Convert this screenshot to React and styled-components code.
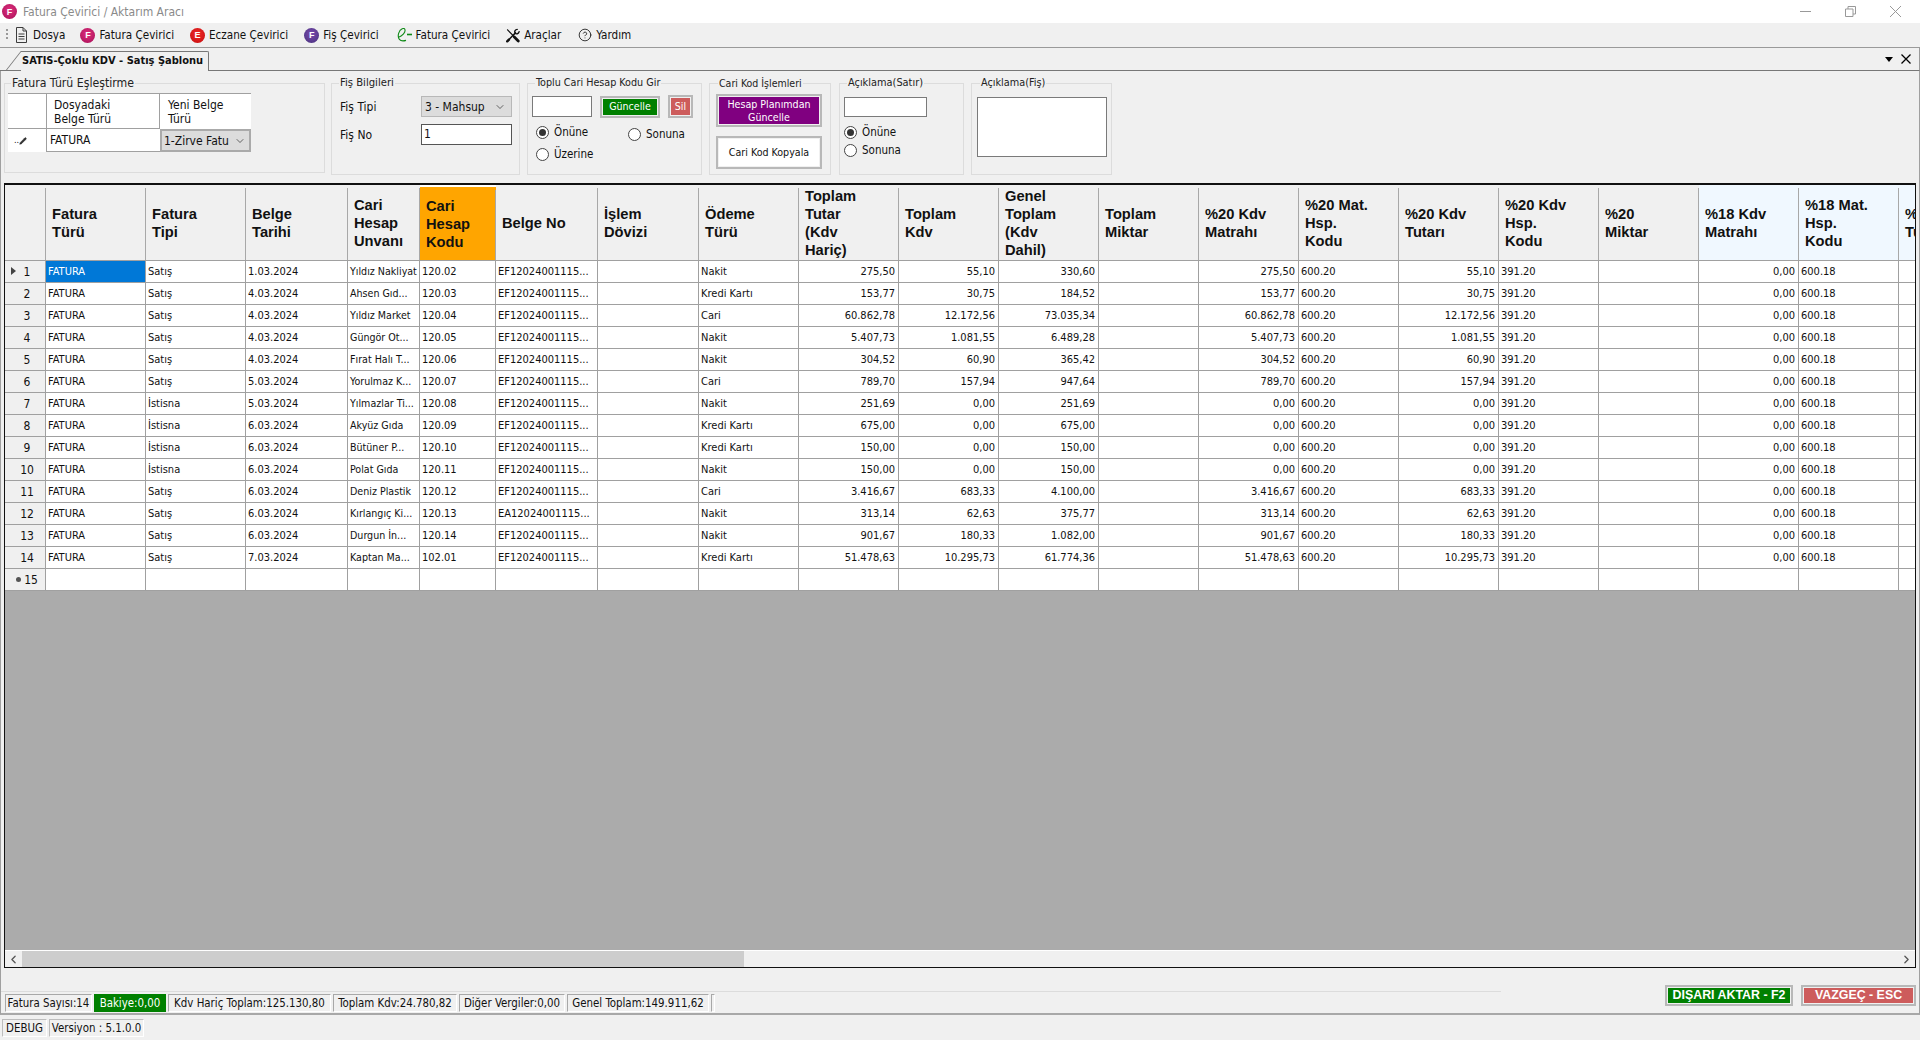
import React from 'react';
import styled, { createGlobalStyle } from 'styled-components';
import { CircleHelp, ChevronDown, ChevronLeft, ChevronRight, Pencil } from 'lucide-react';

const Global = createGlobalStyle`
  html, body { margin: 0; padding: 0; background: #f0f0f0; }
  * { box-sizing: border-box; }
  body { font-family: "DejaVu Sans Condensed", "DejaVu Sans", "Liberation Sans", sans-serif; font-stretch: condensed; font-size: 12px; color: #111; }
`;

const Page = styled.div`
  width: 1920px; height: 1040px; overflow: hidden; display: flex; flex-direction: column; background: #f0f0f0;
`;
const TitleBar = styled.div`
  height: 23px; background: #fff; display: flex; align-items: center; padding-left: 2px; flex: none;
`;
const TitleText = styled.span`color: #8a8a8a; font-size: 12px; margin-left: 6px;`;
const WindowButtons = styled.div`
  margin-left: auto; display: flex; align-items: center; gap: 34px; padding-right: 19px; color: #999;
`;
const MenuBar = styled.div`
  height: 24px; flex: none; display: flex; align-items: center; padding-left: 6px; background: #f0f0f0;
`;
const Grip = styled.span`
  width: 2px; height: 12px; margin-right: 8px; background: repeating-linear-gradient(to bottom, #999 0 2px, transparent 2px 4px);
`;
const MenuItem = styled.div`
  display: flex; align-items: center; gap: 4px; font-size: 11.6px; margin-right: ${p => p.$mr ?? 16}px; white-space: nowrap;
`;
const Badge = styled.span`
  width: 15px; height: 15px; border-radius: 50%; background: ${p => p.$bg};
  color: #fff; font: bold 9px "Liberation Sans", sans-serif; display: inline-flex; align-items: center; justify-content: center; flex: none;
`;
const TabStrip = styled.div`
  height: 24px; flex: none; border-top: 1px solid #9a9a9a; border-bottom: 1px solid #777; border-right: 1px solid #9a9a9a;
  display: flex; align-items: flex-end; padding-left: 21px; background: #f0f0f0;
`;
const Tab = styled.div`
  position: relative; height: 20px; width: 188px; margin-bottom: -1px; background: #f0f0f0;
  border-top: 1px solid #777; border-right: 1px solid #777; border-top-right-radius: 2px;
  font-weight: bold; font-size: 11px; line-height: 18px; padding-left: 1px; white-space: nowrap;
  &::before {
    content: ""; position: absolute; left: -8px; top: -1px; bottom: 0; width: 1px; background: #777;
    transform: skewX(-38deg); transform-origin: center; 
  }
`;
const TabActions = styled.div`
  margin-left: auto; display: flex; align-items: center; gap: 8px; align-self: center; padding-right: 8px;
`;
const Caret = styled.span`
  width: 0; height: 0; border-left: 4px solid transparent; border-right: 4px solid transparent; border-top: 5px solid #000;
`;
const Panel = styled.div`
  height: 944px; flex: none; display: flex; flex-direction: column;
  border-left: 1px solid #a0a0a0; border-right: 1px solid #a0a0a0; border-bottom: 2px solid #a8a8a8;
`;
const GroupRow = styled.div`
  height: 112px; flex: none; display: flex; align-items: flex-start; padding: 5px 0 0 3px;
`;
const Group = styled.fieldset`
  margin: 0 ${p => p.$gap ?? 7}px 0 0; padding: 0; border: 1px solid #dcdcdc; width: ${p => p.$w}px; height: ${p => p.$h ?? 99}px; min-width: 0;
  padding-left: ${p => p.$pl ?? 4}px;
`;
const Legend = styled.legend`
  margin-left: ${p => p.$ml ?? 7}px; padding: 0 1px; font-size: ${p => p.$fs ?? 12}px; line-height: 14px; color: #222; white-space: nowrap;
`;
const MatchGrid = styled.div`
  display: grid; grid-template-columns: 39px 113px 91px; grid-template-rows: 35px 23px; width: 243px; margin-top: 3px;
  background: #fff; border-top: 1px solid #a0a0a0;
`;
const MatchHead = styled.div`
  white-space: pre-line; line-height: 14px; padding: 4px 0 0 ${p => p.$pl}px; background: #fff;
  border-right: ${p => p.$line ? '1px solid #a0a0a0' : '0'}; border-bottom: ${p => p.$lineB ? '1px solid #a0a0a0' : '0'};
`;
const MatchMark = styled.div`
  display: flex; align-items: center; padding-left: 6px; font-size: 9px; line-height: 1; border-right: 1px solid #a0a0a0;
`;
const MatchValue = styled.div`
  padding-left: 3px; line-height: 22px; border-bottom: 1px solid #a0a0a0; font-size: 12px;
`;
const CellSelect = styled.div`
  background: #dcdcdc; border: 2px solid #aaa; display: flex; align-items: center; justify-content: space-between; padding: 0 3px 0 2px;
  white-space: nowrap; overflow: hidden; font-size: 12px;
`;
const FormGrid = styled.div`
  display: grid; grid-template-columns: 81px 91px; grid-template-rows: 21px 21px; row-gap: 7px; padding: 6px 0 0 4px; align-items: center;
`;
const Select = styled.div`
  height: 21px; background: #dcdcdc; border: 1px solid #b8b8b8; display: flex; align-items: center; justify-content: space-between; padding: 0 5px 0 3px;
`;
const Input = styled.div`
  width: ${p => p.$w}px; height: ${p => p.$h}px; background: #fff; border: 1px solid ${p => p.$dark ? '#555' : '#7a7a7a'}; padding: 2px 2px; line-height: 15px;
`;
const BtnRow = styled.div`
  display: flex; align-items: center; padding-top: 5px;
`;
const ColorButton = styled.div`
  width: ${p => p.$w}px; height: ${p => p.$h}px; flex: none;
  border: 2px solid #b8b8b8; padding: 1px; background: ${p => p.$bg}; background-clip: content-box;
  color: ${p => p.$fg}; display: flex; align-items: center; justify-content: center; text-align: center; white-space: pre-line;
  font-size: ${p => p.$fs ?? 12}px; line-height: 13px; margin: ${p => p.$m ?? 0};
  font-weight: ${p => p.$bold ? 'bold' : 'normal'};
  font-family: ${p => p.$bold ? '"Liberation Sans", sans-serif' : 'inherit'};
`;
const RadioGrid = styled.div`
  display: grid; grid-template-columns: 92px auto; padding: 7px 0 0 4px;
`;
const RadioColumn = styled.div`
  display: flex; flex-direction: column; gap: ${p => p.$gap}px; padding-top: ${p => p.$top ?? 0}px;
`;
const RadioLabel = styled.div`
  display: flex; align-items: center; gap: 5px; height: 14px; font-size: 11.5px;
`;
const RadioMark = styled.span`
  width: 13px; height: 13px; border-radius: 50%; border: 1px solid #444; background: #fff; flex: none; display: flex; align-items: center; justify-content: center;
  &::after { content: ""; width: 7px; height: 7px; border-radius: 50%; background: ${p => p.$on ? '#333' : 'transparent'}; }
`;
const Stack = styled.div`
  display: flex; flex-direction: column; padding-top: ${p => p.$top}px; gap: ${p => p.$gap ?? 0}px;
`;
const DataGrid = styled.div`
  flex: 1; min-height: 0; margin: 0 3px 0 3px; display: flex; flex-direction: column; border: 1px solid #111; border-top-width: 2px; overflow: hidden;
`;
const GridBody = styled.div`
  flex: 1; min-height: 0; overflow: hidden; background: #ababab;
`;
const Table = styled.div`
  display: grid; width: max-content; grid-template-columns: 41px 100px 100px 102px 72px 76px 102px 101px repeat(13, 100px);
  grid-template-rows: 76px repeat(15, 22px); background: #fff;
`;
const HeadCell = styled.div`
  position: relative; background: ${p => p.$bg ?? '#f0f0f0'}; font: bold 14.7px/18px "Liberation Sans", sans-serif; color: #111;
  white-space: pre-line; display: flex; align-items: center; padding-left: 6px; border-bottom: 1px solid #a0a0a0;
  margin-top: ${p => p.$orange ? 2 : 0}px;
  &::after {
    content: ""; position: absolute; right: 0; top: 3px; bottom: 0; width: 1px; background: #a8a8a8;
  }
`;
const RowHead = styled.div`
  background: #f0f0f0; border-right: 1px solid #a0a0a0; border-bottom: 1px solid #a0a0a0; display: flex; align-items: center;
  position: relative; justify-content: center; padding-left: 4px; font-size: 12px;
`;
const RowArrow = styled.span`
  position: absolute; left: 6px; top: 6px; width: 0; height: 0; border-top: 4px solid transparent; border-bottom: 4px solid transparent; border-left: 5px solid #444;
`;
const NewDot = styled.span`
  width: 5px; height: 5px; border-radius: 50%; background: #555; margin-right: 3px;
`;
const Cell = styled.div`
  background: ${p => p.$sel ? '#0078d7' : '#fff'}; color: ${p => p.$sel ? '#fff' : '#111'};
  border-right: 1px solid #a0a0a0; border-bottom: 1px solid #a0a0a0;
  font-size: ${p => p.$narrow ? 10.6 : 11}px; line-height: 21px; padding: 0 3px 0 2px; text-align: ${p => p.$right ? 'right' : 'left'};
  white-space: nowrap; overflow: hidden;
`;
const ScrollBar = styled.div`
  height: 17px; flex: none; background: #f0f0f0; border-top: 1px solid #fff; display: flex; align-items: center; color: #555;
`;
const ScrollArrow = styled.div`
  width: 17px; display: flex; align-items: center; justify-content: center; flex: none;
`;
const ScrollTrack = styled.div`
  flex: 1; height: 16px; display: flex;
`;
const ScrollThumb = styled.div`
  width: 722px; background: #cdcdcd;
`;
const Footer = styled.div`
  height: 45px; flex: none; display: flex; align-items: flex-start;
`;
const StatusStrip = styled.div`
  width: 1500px; margin-top: 23px; padding: 2px 0 0 4px; border-top: 1px solid #dcdcdc; display: flex; gap: 2px; height: 22px; flex: none;
`;
const StatusItem = styled.div`
  height: 18px; width: ${p => p.$w}px; flex: none; padding: 0 1px; line-height: 17px; font-size: 11.4px; text-align: center; white-space: nowrap;
  border: 1px solid; border-color: #a8a8a8 #fff #fff #a8a8a8;
  ${p => p.$green ? 'background:#008000;color:#fff;border-color:#008000;' : ''}
`;
const Actions = styled.div`
  margin-left: auto; padding: 17px 3px 0 0; display: flex; gap: 8px;
`;
const BottomBar = styled.div`
  flex: 1; display: flex; gap: 2px; padding: 4px 0 0 2px;
`;
const BottomItem = styled(StatusItem)`border-color: #bdbdbd #fff #fff #bdbdbd;`;

const DocIcon = () => (
  <svg width="13" height="16" viewBox="0 0 13 16" fill="none" stroke="#3c3c3c" strokeWidth="1">
    <path d="M.5.5h6.5l3.5 3.5v11.5H.5z" />
    <path d="M7 .5V4h3.5M2.5 7h6M2.5 9.5h6M2.5 12h6" />
  </svg>
);
const ELogoIcon = () => (
  <svg width="15" height="16" viewBox="0 0 15 16" fill="none" stroke="#108a18">
    <path d="M1.6 10.2C5 9.2 8.6 5.6 8 2.8 7.4.4 3.2 1 1.6 6.4.4 11 2.4 15.4 9 13.4" strokeWidth="1.1" />
    <path d="M10 7.5h5" strokeWidth="1.6" />
  </svg>
);
const ToolsIcon = () => (
  <svg width="14" height="15" viewBox="0 0 16 16" fill="none" stroke="#111" strokeLinecap="round">
    <path d="M1.8 1.5 8.5 8.5" strokeWidth="1.4" />
    <path d="M9.5 9.8 14 14.2" strokeWidth="3.2" />
    <path d="M2.2 13.8 10.8 5" strokeWidth="1.7" />
    <path d="M1.4 14.6 3.4 12.6" strokeWidth="2.8" />
    <path d="M12.8 1C10.6 1 9.3 3.2 10.3 5.2 11.8 6.8 14.4 6.2 15 3.6" strokeWidth="1.6" />
  </svg>
);

const heads = [
  ['Fatura\nTürü'], ['Fatura\nTipi'], ['Belge\nTarihi'], ['Cari\nHesap\nUnvanı'], ['Cari\nHesap\nKodu', '#ffa500'], ['Belge No'],
  ['İşlem\nDövizi'], ['Ödeme\nTürü'], ['Toplam\nTutar\n(Kdv\nHariç)'], ['Toplam\nKdv'], ['Genel\nToplam\n(Kdv\nDahil)'], ['Toplam\nMiktar'],
  ['%20 Kdv\nMatrahı'], ['%20 Mat.\nHsp.\nKodu'], ['%20 Kdv\nTutarı'], ['%20 Kdv\nHsp.\nKodu'], ['%20\nMiktar'],
  ['%18 Kdv\nMatrahı', '#f0f8ff'], ['%18 Mat.\nHsp.\nKodu', '#f0f8ff'], ['%18 Kdv\nTutarı', '#f0f8ff'],
];

const rows = [
  ['Satış', '1.03.2024', 'Yıldız Nakliyat', '120.02', 'EF12024001115...', 'Nakit', '275,50', '55,10', '330,60'],
  ['Satış', '4.03.2024', 'Ahsen Gıd...', '120.03', 'EF12024001115...', 'Kredi Kartı', '153,77', '30,75', '184,52'],
  ['Satış', '4.03.2024', 'Yıldız Market', '120.04', 'EF12024001115...', 'Cari', '60.862,78', '12.172,56', '73.035,34'],
  ['Satış', '4.03.2024', 'Güngör Ot...', '120.05', 'EF12024001115...', 'Nakit', '5.407,73', '1.081,55', '6.489,28'],
  ['Satış', '4.03.2024', 'Fırat Halı T...', '120.06', 'EF12024001115...', 'Nakit', '304,52', '60,90', '365,42'],
  ['Satış', '5.03.2024', 'Yorulmaz K...', '120.07', 'EF12024001115...', 'Cari', '789,70', '157,94', '947,64'],
  ['İstisna', '5.03.2024', 'Yılmazlar Ti...', '120.08', 'EF12024001115...', 'Nakit', '251,69', '0,00', '251,69'],
  ['İstisna', '6.03.2024', 'Akyüz Gıda', '120.09', 'EF12024001115...', 'Kredi Kartı', '675,00', '0,00', '675,00'],
  ['İstisna', '6.03.2024', 'Bütüner P...', '120.10', 'EF12024001115...', 'Kredi Kartı', '150,00', '0,00', '150,00'],
  ['İstisna', '6.03.2024', 'Polat Gıda', '120.11', 'EF12024001115...', 'Nakit', '150,00', '0,00', '150,00'],
  ['Satış', '6.03.2024', 'Deniz Plastik', '120.12', 'EF12024001115...', 'Cari', '3.416,67', '683,33', '4.100,00'],
  ['Satış', '6.03.2024', 'Kırlangıç Ki...', '120.13', 'EA12024001115...', 'Nakit', '313,14', '62,63', '375,77'],
  ['Satış', '6.03.2024', 'Durgun İn...', '120.14', 'EF12024001115...', 'Nakit', '901,67', '180,33', '1.082,00'],
  ['Satış', '7.03.2024', 'Kaptan Ma...', '102.01', 'EF12024001115...', 'Kredi Kartı', '51.478,63', '10.295,73', '61.774,36'],
];

const rightCols = new Set([8, 9, 10, 11, 12, 14, 16, 17, 19]);

const toCells = ([tipi, tarih, unvan, kod, belge, odeme, tutar, kdv, genel]) => {
  const zero = kdv === '0,00';
  return ['FATURA', tipi, tarih, unvan, kod, belge, '', odeme, tutar, kdv, genel, '', zero ? '0,00' : tutar, '600.20', kdv, '391.20', '', '0,00', '600.18', ''];
};

const Radio = ({ on, children }) => (
  <RadioLabel><RadioMark $on={on} />{children}</RadioLabel>
);

export default function App() {
  return (
    <Page>
      <Global />
      <TitleBar>
        <Badge $bg="radial-gradient(circle at 50% 40%, #e0307f, #a50f55)">F</Badge>
        <TitleText>Fatura Çevirici / Aktarım Aracı</TitleText>
        <WindowButtons>
          <svg width="11" height="11" viewBox="0 0 11 11"><path d="M0 5.5h11" stroke="#999" /></svg>
          <svg width="11" height="11" viewBox="0 0 11 11" fill="none" stroke="#999"><path d="M.5 3h7.5v7.5H.5zM3 3V.5h7.5V8H8" /></svg>
          <svg width="11" height="11" viewBox="0 0 11 11" stroke="#999"><path d="M0 0l11 11M11 0L0 11" /></svg>
        </WindowButtons>
      </TitleBar>
      <MenuBar>
        <Grip />
        <MenuItem $mr={15}><DocIcon />Dosya</MenuItem>
        <MenuItem $mr={16}><Badge $bg="radial-gradient(circle at 50% 40%, #e0307f, #a50f55)">F</Badge>Fatura Çevirici</MenuItem>
        <MenuItem $mr={16}><Badge $bg="radial-gradient(circle at 50% 40%, #f02a2a, #c40d0d)">E</Badge>Eczane Çevirici</MenuItem>
        <MenuItem $mr={18}><Badge $bg="radial-gradient(circle at 50% 40%, #7a4bb0, #46307a)">F</Badge>Fiş Çevirici</MenuItem>
        <MenuItem $mr={16}><ELogoIcon />Fatura Çevirici</MenuItem>
        <MenuItem $mr={17}><ToolsIcon />Araçlar</MenuItem>
        <MenuItem><CircleHelp size={14} strokeWidth={1.4} />Yardım</MenuItem>
      </MenuBar>
      <TabStrip>
        <Tab>SATIS-Çoklu KDV - Satış Şablonu</Tab>
        <TabActions>
          <Caret />
          <svg width="10" height="10" viewBox="0 0 10 10" stroke="#000" strokeWidth="1.3"><path d="M.5.5l9 9M9.5.5l-9 9" /></svg>
        </TabActions>
      </TabStrip>
      <Panel>
        <GroupRow>
          <Group $w={321} $h={97} $gap={6} $pl={3}>
            <Legend $ml={3} $fs={12.2}>Fatura Türü Eşleştirme</Legend>
            <MatchGrid>
              <MatchHead $pl={0} $line $lineB />
              <MatchHead $pl={7} $line $lineB>{'Dosyadaki\nBelge Türü'}</MatchHead>
              <MatchHead $pl={8}>{'Yeni Belge\nTürü'}</MatchHead>
              <MatchMark>..<Pencil size={8} fill="#333" strokeWidth={1} /></MatchMark>
              <MatchValue>FATURA</MatchValue>
              <CellSelect>1-Zirve Fatu<ChevronDown size={12} strokeWidth={1.2} /></CellSelect>
            </MatchGrid>
          </Group>
          <Group $w={189} $pl={4}>
            <Legend $ml={3} $fs={11.2}>Fiş Bilgileri</Legend>
            <FormGrid>
              <span>Fiş Tipi</span>
              <Select>3 - Mahsup<ChevronDown size={12} strokeWidth={1.2} /></Select>
              <span>Fiş No</span>
              <Input $w={91} $h={21} $dark>1</Input>
            </FormGrid>
          </Group>
          <Group $w={175}>
            <Legend $ml={3} $fs={10.7}>Toplu Cari Hesap Kodu Gir</Legend>
            <BtnRow>
              <Input $w={60} $h={21} />
              <ColorButton $w={60} $h={22} $bg="#008000" $fg="#fff" $fs={10.6} $m="0 0 0 8px">Güncelle</ColorButton>
              <ColorButton $w={25} $h={23} $bg="#cd5c5c" $fg="#fff" $fs={10.6} $m="0 0 0 8px">Sil</ColorButton>
            </BtnRow>
            <RadioGrid>
              <RadioColumn $gap={8}>
                <Radio on>Önüne</Radio>
                <Radio>Üzerine</Radio>
              </RadioColumn>
              <RadioColumn $gap={8} $top={2}>
                <Radio>Sonuna</Radio>
              </RadioColumn>
            </RadioGrid>
          </Group>
          <Group $w={122} $gap={8} $pl={6}>
            <Legend $ml={2} $fs={10.5}>Cari Kod İşlemleri</Legend>
            <Stack $top={4} $gap={9}>
              <ColorButton $w={106} $h={33} $bg="#800080" $fg="#fff" $fs={10.6}>{'Hesap Planımdan\nGüncelle'}</ColorButton>
              <ColorButton $w={106} $h={33} $bg="#fff" $fg="#111" $fs={10.6}>Cari Kod Kopyala</ColorButton>
            </Stack>
          </Group>
          <Group $w={125} $pl={4}>
            <Legend $ml={3} $fs={10.9}>Açıklama(Satır)</Legend>
            <Stack $top={7} $gap={5}>
              <Input $w={83} $h={20} />
              <RadioColumn $gap={4} $top={3}>
                <Radio on>Önüne</Radio>
                <Radio>Sonuna</Radio>
              </RadioColumn>
            </Stack>
          </Group>
          <Group $w={141} $pl={5} $gap={0}>
            <Legend $ml={3} $fs={10.8}>Açıklama(Fiş)</Legend>
            <Stack $top={7}>
              <Input $w={130} $h={60} />
            </Stack>
          </Group>
        </GroupRow>
        <DataGrid>
          <GridBody>
            <Table>
              <HeadCell />
              {heads.map(([label, bg], i) => (
                <HeadCell key={i} $bg={bg} $orange={bg === '#ffa500'}>{label}</HeadCell>
              ))}
              {rows.map((row, r) => (
                <React.Fragment key={r}>
                  <RowHead>{r === 0 && <RowArrow />}{r + 1}</RowHead>
                  {toCells(row).map((value, c) => (
                    <Cell key={c} $right={rightCols.has(c)} $narrow={c === 3} $sel={r === 0 && c === 0}>{value}</Cell>
                  ))}
                </React.Fragment>
              ))}
              <RowHead><NewDot />15</RowHead>
              {heads.map((_, c) => <Cell key={c} />)}
            </Table>
          </GridBody>
          <ScrollBar>
            <ScrollArrow><ChevronLeft size={13} strokeWidth={2.4} /></ScrollArrow>
            <ScrollTrack><ScrollThumb /></ScrollTrack>
            <ScrollArrow><ChevronRight size={13} strokeWidth={2.4} /></ScrollArrow>
          </ScrollBar>
        </DataGrid>
        <Footer>
          <StatusStrip>
            <StatusItem $w={87}>Fatura Sayısı:14</StatusItem>
            <StatusItem $w={72} $green>Bakiye:0,00</StatusItem>
            <StatusItem $w={163}>Kdv Hariç Toplam:125.130,80</StatusItem>
            <StatusItem $w={124}>Toplam Kdv:24.780,82</StatusItem>
            <StatusItem $w={106}>Diğer Vergiler:0,00</StatusItem>
            <StatusItem $w={142}>Genel Toplam:149.911,62</StatusItem>
            <StatusItem $w={4} />
          </StatusStrip>
          <Actions>
            <ColorButton $w={128} $h={21} $bg="#008000" $fg="#fff" $fs={12.4} $bold>DIŞARI AKTAR - F2</ColorButton>
            <ColorButton $w={115} $h={21} $bg="#cd5c5c" $fg="#fff" $fs={12.4} $bold>VAZGEÇ - ESC</ColorButton>
          </Actions>
        </Footer>
      </Panel>
      <BottomBar>
        <BottomItem $w={45}>DEBUG</BottomItem>
        <BottomItem $w={95}>Versiyon : 5.1.0.0</BottomItem>
      </BottomBar>
    </Page>
  );
}
